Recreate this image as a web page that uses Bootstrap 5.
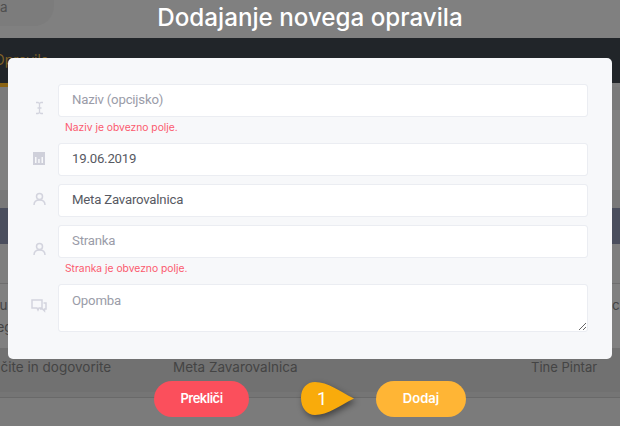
<!DOCTYPE html>
<html lang="sl">
<head>
<meta charset="utf-8">
<title>Dodajanje novega opravila</title>
<link href="https://cdn.jsdelivr.net/npm/bootstrap@5.3.0/dist/css/bootstrap.min.css" rel="stylesheet">
<style>
html,body{height:426px;overflow:hidden}
body{background:#7b7b7b;font-family:"Inter","Liberation Sans",sans-serif;position:relative}
.bgpage{position:absolute;inset:0}
.bg-search{height:26px;width:54px;border-radius:0 0 20px 0;background:#7c7c7c;color:#4f4f4f;font-size:13.5px;line-height:15px}
.bg-top{height:38px;background:#808080}
.bg-dark{height:45px;background:#1f1f2e;position:relative;overflow:hidden}
.bg-tab{position:absolute;left:-6px;top:11px;color:#7f6128;font-size:14px}
.bg-line{height:4px;width:100%;background:linear-gradient(90deg,#8a6415 50px,#7c7c7c 50px)}
.band1{height:23px;background:#7a7a7a}
.band2{height:80px;background:#808080}
.band3{height:18px;background:#787878}
.band4{height:36px;background:#4a4e5d}
.band5{height:39px;background:#7e7e7e;border-bottom:1px solid #6e6e6e;box-sizing:content-box}
.band6{height:64px;background:#808080}
.band7{height:44px;background:#717171}
.band8{height:6px;background:#757575;border-bottom:1px solid #696969}
.title-txt{position:absolute;top:2px;left:0;right:0;text-align:center;color:#fff;font-size:24.200px;line-height:32px;font-weight:500}
.dlg{position:absolute;left:8px;top:58px;width:604px;height:301px;background:#f7f8fa;border-radius:5px;padding:26px 24px 0 18px}
.frow{display:flex;align-items:flex-start}
.ico{width:26px;margin-right:6px;flex:none;display:flex;justify-content:center;color:#d3d4de}
.i1{margin-top:17px}
.i2{margin-top:9px}
.i3{margin-top:8px}
.i4{margin-top:17px}
.i5{margin-top:15px}
.fcol{flex:1;min-width:0}
.form-control.fld{height:33px;border:1px solid #ebedf2;border-radius:3px;padding:0 13px 2px;font-family:Roboto,"Liberation Sans",sans-serif;font-size:13.2px;letter-spacing:-.2px;color:#575962;box-shadow:none}
.form-control.fld::placeholder{color:#9a9ca8;opacity:1}
textarea.form-control.fld{height:48px;min-height:0;padding-top:6px;resize:vertical}
.err{font-size:10.3px;color:#fb5a6e;line-height:12px;padding:4px 0 0 7px;height:26px}
.gap8{height:8px}
.act{position:absolute;top:381px;height:36px;border-radius:18px;border:0;font-size:13px;font-weight:600;padding:0}
.btn.cancel{left:154px;width:95px;background:#fb4f5c;color:#fff;letter-spacing:-.5px}
.btn.add{left:376px;width:90px;background:#ffb535;color:#fff}
.pin{position:absolute;left:301px;top:382px;width:53px;height:33px;filter:drop-shadow(2px 3px 3px rgba(0,0,0,.45))}
.pin-n{position:absolute;left:301px;top:382px;width:42px;height:33px;line-height:34px;text-align:center;color:#fff;font-size:18px;font-family:Roboto,sans-serif}
.bgt{position:absolute;white-space:nowrap;font-size:13.5px;line-height:16px;color:#444}
.t1{left:-6px;top:359px}
.t2{left:173px;top:359px}
.t3{left:531px;top:359px;font-size:13px}
.t4{left:-9px;top:297px}
.t5{left:-12px;top:319px}
.t6{left:612px;top:297px}
</style>
</head>
<body>
<div class="bgpage">
  <div class="bg-top"><div class="bg-search">a</div></div>
  <div class="bg-dark"><span class="bg-tab">Opravila</span></div>
  <div class="bg-line"></div>
  <div class="band1"></div>
  <div class="band2"></div>
  <div class="band3"></div>
  <div class="band4"></div>
  <div class="band5"></div>
  <div class="band6"></div>
  <div class="band7"></div>
  <div class="band8"></div>
  <span class="bgt t4">Pu:</span>
  <span class="bgt t5">Reg</span>
  <span class="bgt t6">ce</span>
  <span class="bgt t1">ličite in dogovorite</span>
  <span class="bgt t2">Meta Zavarovalnica</span>
  <span class="bgt t3">Tine Pintar</span>
</div>
<div class="title-txt">Dodajanje novega opravila</div>
<div class="dlg">
  <div class="frow"><div class="ico i1"><svg width="9" height="14" viewBox="0 0 9 14" fill="none" stroke="currentColor" stroke-width="1.3"><path d="M1 1.500h2l1.500 1 1.500-1h2M1 12.500h2l1.500-1 1.500 1h2M4.500 2v10M2.500 7h4"/></svg></div><div class="fcol"><input class="form-control fld" placeholder="Naziv (opcijsko)"><div class="err">Naziv je obvezno polje.</div></div></div>
  <div class="frow"><div class="ico i2"><svg width="12" height="13" viewBox="0 0 12 13" fill="#cfd0da"><path fill-rule="evenodd" d="M0 0h12v13H0zM2 5v6h1.500V5zM5.200 7v4h1.500V7zM8.500 5v6H10V5z"/></svg></div><div class="fcol"><input class="form-control fld" value="19.06.2019"></div></div>
  <div class="gap8"></div>
  <div class="frow"><div class="ico i3"><svg width="13" height="14" viewBox="0 0 13 14" fill="none" stroke="currentColor" stroke-width="1.5"><circle cx="6.500" cy="4.500" r="3"/><path d="M1 13c0-3 2.200-5 5.500-5s5.500 2 5.500 5"/></svg></div><div class="fcol"><input class="form-control fld" value="Meta Zavarovalnica"></div></div>
  <div class="gap8"></div>
  <div class="frow"><div class="ico i4"><svg width="13" height="14" viewBox="0 0 13 14" fill="none" stroke="currentColor" stroke-width="1.5"><circle cx="6.500" cy="4.500" r="3"/><path d="M1 13c0-3 2.200-5 5.500-5s5.500 2 5.500 5"/></svg></div><div class="fcol"><input class="form-control fld" placeholder="Stranka"><div class="err">Stranka je obvezno polje.</div></div></div>
  <div class="frow"><div class="ico i5"><svg width="16" height="14" viewBox="0 0 16 14" fill="none" stroke="currentColor" stroke-width="1.500"><path d="M1 1h10v8H8l-1 2-1-2H1zM12.500 4H15v6h-1.500v2l-2-2H9"/></svg></div><div class="fcol"><textarea class="form-control fld" placeholder="Opomba"></textarea></div></div>
</div>
<button class="btn act cancel">Prekliči</button>
<button class="btn act add">Dodaj</button>
<svg class="pin" viewBox="0 0 53 33"><path d="M0 16C0 6 6 0 14 0c13 0 24 9 39 16.500C38 24 27 33 14 33 6 33 0 26 0 16z" fill="#f9ab0b"/></svg>
<div class="pin-n">1</div>
</body>
</html>
